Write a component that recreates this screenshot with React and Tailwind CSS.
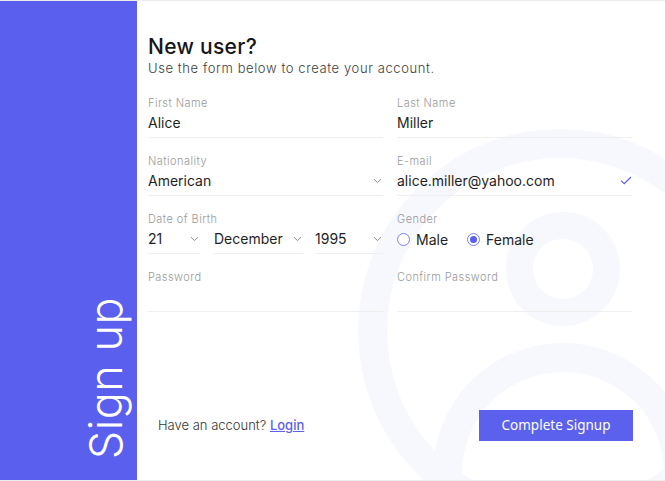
import React from "react";

const Chevron = ({ className = "" }) => (
  <svg width="9" height="6" viewBox="0 0 9 6" className={className} fill="none">
    <path d="M1 1.2 L4.5 4.6 L8 1.2" stroke="#8a8a8a" strokeWidth="1" />
  </svg>
);

const Check = () => (
  <svg width="12" height="9" viewBox="0 0 12 9" fill="none">
    <path d="M1 4.6 L4.2 7.6 L11 1" stroke="#5b5fee" strokeWidth="1.2" />
  </svg>
);

const Label = ({ children }) => (
  <div className="h-[14px] text-[11px] font-light leading-[14px] tracking-[0.45px] text-[#9a9a9a]">{children}</div>
);

const Field = ({ label, value, right }) => (
  <div>
    <Label>{label}</Label>
    <div className="flex h-[28px] items-center justify-between border-b border-[#efefef] pb-[2px] text-[14px] text-[#1f1f1f]">
      <span>{value}</span>
      {right}
    </div>
  </div>
);

const SelectBox = ({ value, className }) => (
  <div className={"flex h-[28px] items-center justify-between border-b border-[#efefef] pb-[2px] text-[14px] text-[#1f1f1f] " + className}>
    <span>{value}</span>
    <Chevron className="mr-[1px]" />
  </div>
);

const Radio = ({ checked, label }) => (
  <label className="flex items-center gap-[6px]">
    <span className="flex h-[13px] w-[13px] items-center justify-center rounded-full border border-[#7c80f0] bg-white">
      {checked && <span className="h-[7px] w-[7px] rounded-full bg-[#5b5fee]" />}
    </span>
    <span>{label}</span>
  </label>
);

export default function App() {
  return (
    <div
      className="flex h-[481px] w-[665px] overflow-hidden border-y border-[#ececec] bg-white"
      style={{ fontFamily: "Inter, 'Open Sans', sans-serif" }}
    >
      {/* Side banner */}
      <aside className="flex w-[137px] shrink-0 items-end justify-end bg-[#5b5fee] pb-[21px] pr-[8px]">
        <div className="rotate-180 text-[45px] font-light leading-[46px] tracking-[0.5px] text-white [writing-mode:vertical-rl]">
          Sign up
        </div>
      </aside>

      {/* Form */}
      <main className="relative flex flex-1 flex-col pl-[11px]">
        <svg className="pointer-events-none absolute left-0 top-0" width="528" height="481" viewBox="137 0 528 481">
          <g fill="none" stroke="#f7f8fe">
            <circle cx="560" cy="330" r="187.5" strokeWidth="29" />
            <circle cx="563" cy="268" r="43.5" strokeWidth="27" />
            <circle cx="563" cy="472" r="115.5" strokeWidth="29" />
          </g>
        </svg>

        <div className="relative pt-[34px]">
          <h1 className="text-[21px] font-medium leading-[24px] tracking-[0.3px] text-[#161616]">New user?</h1>
          <p className="text-[13px] font-light leading-[18px] tracking-[0.6px] text-[#3d3d3d]">
            Use the form below to create your account.
          </p>

          <div className="mt-[19px] grid w-[484px] grid-cols-2 gap-x-[14px] gap-y-[16px]">
            <Field label="First Name" value="Alice" />
            <Field label="Last Name" value="Miller" />
            <Field label="Nationality" value="American" right={<Chevron className="mr-[1px]" />} />
            <Field label="E-mail" value="alice.miller@yahoo.com" right={<Check />} />

            <div>
              <Label>Date of Birth</Label>
              <div className="flex">
                <SelectBox value="21" className="w-[52px]" />
                <SelectBox value="December" className="ml-[14px] w-[89px]" />
                <SelectBox value="1995" className="ml-[12px] w-[68px]" />
              </div>
            </div>
            <div>
              <Label>Gender</Label>
              <div className="flex h-[28px] items-center gap-[19px] pb-[2px] text-[14px] text-[#1f1f1f]">
                <Radio label="Male" />
                <Radio checked label="Female" />
              </div>
            </div>

            <Field label="Password" value="" />
            <Field label="Confirm Password" value="" />
          </div>
        </div>

        <div className="relative mb-[39px] mt-auto flex w-[485px] items-center justify-between pl-[10px]">
          <p className="text-[13px] font-light text-[#333]">
            Have an account?{" "}
            <a href="#" className="font-medium text-[#5b5fee] underline">
              Login
            </a>
          </p>
          <button
            type="button"
            className="h-[31px] w-[154px] bg-[#5b61ec] text-[13.5px] text-white"
            style={{ fontFamily: "'Noto Sans', sans-serif" }}
          >
            Complete Signup
          </button>
        </div>
      </main>
    </div>
  );
}
